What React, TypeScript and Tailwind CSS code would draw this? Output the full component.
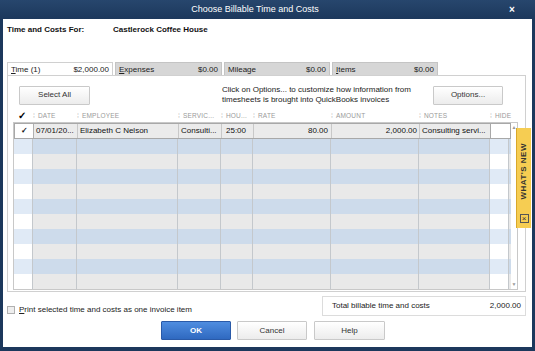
import React from "react";

const cols = [
  { w: 20, label: "✓" },
  { w: 44, label: "DATE" },
  { w: 101, label: "EMPLOYEE" },
  { w: 43, label: "SERVIC..." },
  { w: 32, label: "HOU..." },
  { w: 78, label: "RATE" },
  { w: 88, label: "AMOUNT" },
  { w: 71, label: "NOTES" },
  { w: 20, label: "HIDE" },
];

function Tab({ name, u, amount, active, w }: { name: string; u: number; amount: string; active?: boolean; w: number }) {
  return (
    <div
      className={
        "h-[14px] flex items-center justify-between px-[3px] mr-[2px] text-[8px] text-[#222] border border-b-0 " +
        (active ? "bg-white border-[#d0d0d0]" : "bg-[#d6d6d6] border-[#c4c4c4]")
      }
      style={{ width: w }}
    >
      {u >= 0 ? (
        <span>
          {name.slice(0, u)}
          <span className="underline">{name[u]}</span>
          {name.slice(u + 1)}
        </span>
      ) : (
        <span>{name}</span>
      )}
      <span>{amount}</span>
    </div>
  );
}

function Btn({ children, w, primary }: { children: React.ReactNode; w: number; primary?: boolean }) {
  return (
    <div
      className={
        "h-[19px] flex items-center justify-center text-[8px] border rounded-[1px] " +
        (primary
          ? "bg-gradient-to-b from-[#4f8de0] to-[#2f69c0] border-[#2a5aa8] text-white font-bold"
          : "bg-gradient-to-b from-[#ffffff] to-[#ececec] border-[#c9c9c9] text-[#333]")
      }
      style={{ width: w }}
    >
      {children}
    </div>
  );
}

export default function App() {
  const rows = Array.from({ length: 10 }, (_, i) => i % 2 === 0);
  return (
    <div
      className="w-[535px] h-[351px] bg-[#1c385c] flex flex-col relative overflow-hidden"
      style={{ fontFamily: '"Liberation Sans", Arial, sans-serif' }}
    >
      <div className="h-[19px] flex items-center bg-gradient-to-b from-[#27466d] to-[#1c385c]">
        <div className="flex-1 text-center text-white text-[9px] pl-[8px]">Choose Billable Time and Costs</div>
        <div className="w-[20px] text-white text-[10px] font-bold text-center mr-[13px]">×</div>
      </div>
      <div className="flex-1 mx-[3px] mb-[4px] bg-white flex flex-col px-[4px]">
        <div className="flex items-center h-[12px] mt-[5px] text-[8px] font-bold text-[#111]">
          <span className="w-[106px]">Time and Costs For:</span>
          <span>Castlerock Coffee House</span>
        </div>
        <div className="flex mt-[26px]">
          <Tab name="Time (1)" u={0} amount="$2,000.00" active w={106} />
          <Tab name="Expenses" u={0} amount="$0.00" w={107} />
          <Tab name="Mileage" u={-1} amount="$0.00" w={106} />
          <Tab name="Items" u={0} amount="$0.00" w={106} />
        </div>
        <div className="w-[519px] h-[217px] border border-[#d0d0d0] -mt-px flex flex-col px-[5px]">
          <div className="flex items-center mt-[9px] h-[20px]">
            <div className="ml-[6px]">
              <Btn w={71}>Select All</Btn>
            </div>
            <div className="ml-[132px] text-[8px] leading-[10px] text-[#222] w-[210px]">
              Click on Options... to customize how information from timesheets is brought into QuickBooks invoices
            </div>
            <div className="ml-[1px]">
              <Btn w={70}>Options...</Btn>
            </div>
          </div>
          <div className="flex h-[13px] mt-[4px] items-center">
            {cols.map((c, i) => (
              <div key={i} className="flex items-center h-full" style={{ width: c.w }}>
                {i === 0 ? (
                  <span className="pl-[5px] text-[10px] font-bold text-black leading-none">✓</span>
                ) : (
                  <>
                    <span className="text-[#c0c0c0] text-[7px] leading-none">⁞</span>
                    <span className="pl-[3px] text-[6.5px] text-[#9a9a9a] tracking-[0.2px]">{c.label}</span>
                  </>
                )}
              </div>
            ))}
          </div>
          <div className="flex border border-[#c8c8c8] w-[505px]">
            <div className="flex flex-col">
              <div className="flex h-[16px] bg-[#ebebeb] border border-[#a8a8a8] text-[8px] text-[#111] items-center">
                <div className="w-[19px] h-full bg-white flex items-center justify-center border-r border-[#b0b0b0]">
                  <span className="text-[8px] font-bold leading-none">✓</span>
                </div>
                <div className="w-[44px] pl-[2px] border-r border-[#c8c8c8] h-full flex items-center">07/01/20...</div>
                <div className="w-[101px] pl-[2px] border-r border-[#c8c8c8] h-full flex items-center">Elizabeth C Nelson</div>
                <div className="w-[43px] pl-[2px] border-r border-[#c8c8c8] h-full flex items-center">Consulti...</div>
                <div className="w-[32px] pl-[4px] border-r border-[#c8c8c8] h-full flex items-center">25:00</div>
                <div className="w-[78px] pr-[3px] border-r border-[#c8c8c8] h-full flex items-center justify-end">80.00</div>
                <div className="w-[88px] pr-[2px] border-r border-[#c8c8c8] h-full flex items-center justify-end">2,000.00</div>
                <div className="w-[70px] pl-[2px] h-full flex items-center whitespace-nowrap overflow-hidden">Consulting servi...</div>
                <div className="w-[20px] h-full bg-white border-l border-[#a8a8a8]" />
              </div>
              {rows.map((blue, i) => (
                <div key={i} className={"flex h-[15px] " + (blue ? "bg-[#cddbeb]" : "bg-[#e9e9e9]")}>
                  {cols.map((c, j) => (
                    <div
                      key={j}
                      className={
                        "h-full border-r border-[#c4c8cc] " +
                        (j === 0 || j === 8 ? (blue ? "bg-[#e0eaf6]" : "bg-white") : "")
                      }
                      style={{ width: j === 0 ? c.w - 1 : j === 8 ? c.w - 1 : c.w }}
                    />
                  ))}
                </div>
              ))}
            </div>
            <div className="flex-1 bg-white flex flex-col justify-between items-center py-[2px]">
              <span className="text-[5px] text-[#9a9a9a] leading-none">▲</span>
              <span className="text-[5px] text-[#9a9a9a] leading-none">▼</span>
            </div>
          </div>
        </div>
        <div className="flex items-start mt-[4px]">
          <div className="flex items-center mt-[8px]">
            <div className="w-[8px] h-[8px] border border-[#b0b0b0] bg-[#eeeeee]" />
            <span className="ml-[4px] text-[8px] text-[#222]">
              <span className="underline">P</span>rint selected time and costs as one invoice item
            </span>
          </div>
          <div className="ml-auto mr-[2px] w-[204px] h-[20px] border border-[#dcdcdc] flex items-center justify-between px-[9px] text-[8px] text-[#222]">
            <span>Total billable time and costs</span>
            <span className="-mr-[5px]">2,000.00</span>
          </div>
        </div>
        <div className="flex mt-[5px] pl-[154px] gap-[6px]">
          <Btn w={70} primary>OK</Btn>
          <Btn w={70}>Cancel</Btn>
          <div className="ml-[1px]">
            <Btn w={71}>Help</Btn>
          </div>
        </div>
      </div>
      <div className="absolute left-[516px] top-[128px] w-[15px] h-[100px] bg-[#f6cd52] border-l border-[#d9a82a] flex flex-col items-center">
        <div className="flex-1 flex items-center justify-center">
          <span
            className="text-[8px] font-bold text-[#333] tracking-[0.5px] rotate-180"
            style={{ writingMode: "vertical-rl" }}
          >
            WHAT'S NEW
          </span>
        </div>
        <div className="w-[9px] h-[9px] border border-[#555] mb-[5px] flex items-center justify-center text-[8px] leading-none text-[#333]">
          ×
        </div>
      </div>
    </div>
  );
}
